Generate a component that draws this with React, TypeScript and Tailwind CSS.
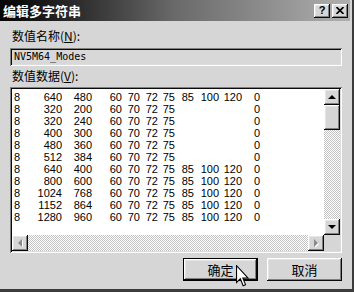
import React from 'react';

// Windows 2000 style "Edit Multi-String" registry dialog

const raised =
  'shadow-[inset_-1px_-1px_#0a0a0a,inset_1px_1px_#ffffff,inset_-2px_-2px_#808080,inset_2px_2px_#e4e4e4]';
const sunken =
  'shadow-[inset_1px_1px_#808080,inset_-1px_-1px_#ffffff,inset_2px_2px_#0a0a0a,inset_-2px_-2px_#dcdcdc]';
const dither =
  'bg-[image:repeating-conic-gradient(#c4c4c4_0%_25%,#ffffff_0%_50%)] bg-[length:2px_2px]';

type Row = { w: string; h: string; rates: string[]; extra: string[] };

const full = ['85', '100', '120'];
const rows: Row[] = [
  { w: '640', h: '480', rates: ['60', '70', '72', '75'], extra: full },
  { w: '320', h: '200', rates: ['60', '70', '72', '75'], extra: [] },
  { w: '320', h: '240', rates: ['60', '70', '72', '75'], extra: [] },
  { w: '400', h: '300', rates: ['60', '70', '72', '75'], extra: [] },
  { w: '480', h: '360', rates: ['60', '70', '72', '75'], extra: [] },
  { w: '512', h: '384', rates: ['60', '70', '72', '75'], extra: [] },
  { w: '640', h: '400', rates: ['60', '70', '72', '75'], extra: full },
  { w: '800', h: '600', rates: ['60', '70', '72', '75'], extra: full },
  { w: '1024', h: '768', rates: ['60', '70', '72', '75'], extra: full },
  { w: '1152', h: '864', rates: ['60', '70', '72', '75'], extra: full },
  { w: '1280', h: '960', rates: ['60', '70', '72', '75'], extra: full },
];

const Arrow = ({ dir, disabled }: { dir: 'up' | 'down' | 'left' | 'right'; disabled?: boolean }) => {
  const pts = {
    up: '4,1 0,5 8,5',
    down: '0,1 8,1 4,5',
    left: '5,0 5,8 1,4',
    right: '1,0 1,8 5,4',
  }[dir];
  const vertical = dir === 'up' || dir === 'down';
  return (
    <svg width={vertical ? 8 : 6} height={vertical ? 6 : 8} viewBox={vertical ? '0 0 8 6' : '0 0 6 8'}>
      {disabled && <polygon points={pts} fill="#ffffff" transform="translate(1,1)" />}
      <polygon points={pts} fill={disabled ? '#8a8a8a' : '#000000'} />
    </svg>
  );
};

const ScrollButton = ({ dir, disabled }: { dir: 'up' | 'down' | 'left' | 'right'; disabled?: boolean }) => (
  <div className={`w-[16px] h-[16px] shrink-0 bg-[#d6d6d6] flex items-center justify-center ${raised}`}>
    <Arrow dir={dir} disabled={disabled} />
  </div>
);

const Cursor = () => (
  <svg className="absolute left-[236px] top-[265px]" width="13" height="22" viewBox="0 0 12 20">
    <path
      d="M0.5 0.5 V16 L4 12.6 L6.6 19 L8.8 18 L6.3 11.8 H11 Z"
      fill="#ffffff"
      stroke="#000000"
      strokeWidth="1"
      strokeLinejoin="miter"
    />
  </svg>
);

const App: React.FC = () => {
  return (
    <div className="relative w-[354px] h-[292px] bg-[#d6d6d6] border-r-2 border-b-[3px] border-r-[#3c3c3c] border-b-[#3c3c3c] overflow-hidden font-['Liberation_Sans','Noto_Sans_CJK_SC',sans-serif]">
      <div className="flex flex-col h-full pr-[2px]">
        {/* title bar */}
        <div className="h-[21px] shrink-0 flex items-center justify-between pl-[3px] pr-[2px] bg-gradient-to-r from-[#050505] via-[#6a6a6a] to-[#b0b0b0]">
          <span className="text-white font-bold text-[13px] leading-none font-['Noto_Sans_CJK_SC',sans-serif]">
            编辑多字符串
          </span>
          <div className="flex gap-[2px]">
            <div className={`w-[16px] h-[14px] bg-[#d6d6d6] flex items-center justify-center ${raised}`}>
              <span className="text-[11px] font-bold leading-none text-black">?</span>
            </div>
            <div className={`w-[16px] h-[14px] bg-[#d6d6d6] flex items-center justify-center ${raised}`}>
              <svg width="8" height="7" viewBox="0 0 8 7">
                <path d="M0.5 0 L7.5 7 M7.5 0 L0.5 7" stroke="#000" strokeWidth="1.6" />
              </svg>
            </div>
          </div>
        </div>

        {/* body */}
        <div className="flex flex-col pl-[10px] pr-[8px]">
          <div className="mt-[8px] h-[14px] pl-[2px] text-[12px] leading-[14px] text-black font-['Noto_Sans_CJK_SC',sans-serif]">
            数值名称(<span className="underline">N</span>):
          </div>

          <div className={`mt-[5px] h-[18px] flex items-center pl-[4px] bg-[#d8d8d8] ${sunken}`}>
            <span className="text-[10px] leading-none text-black font-['DejaVu_Sans_Mono',monospace]">
              NV5M64_Modes
            </span>
          </div>

          <div className="mt-[3px] h-[14px] pl-[2px] text-[12px] leading-[14px] text-black font-['Noto_Sans_CJK_SC',sans-serif]">
            数值数据(<span className="underline">V</span>):
          </div>

          {/* multi-line edit box */}
          <div className={`mt-[4px] h-[166px] p-[2px] bg-white ${sunken}`}>
            <div className="flex flex-col h-full">
              <div className="flex flex-1 min-h-0">
                <div className="flex-1 pt-[2px] pl-[2px] text-[11px] leading-[12px] text-black font-['Liberation_Sans',Arial,sans-serif]">
                  {rows.map((r, i) => (
                    <div
                      key={i}
                      className="grid grid-cols-[20px_28px_30px_30px_18px_18px_17px_19px_25px_23px_18px] h-[12px]"
                    >
                      <span>8</span>
                      <span className="text-right">{r.w}</span>
                      <span className="text-right">{r.h}</span>
                      {r.rates.map((v, j) => (
                        <span key={j} className="text-right">
                          {v}
                        </span>
                      ))}
                      <span className="text-right">{r.extra[0] ?? ''}</span>
                      <span className="text-right">{r.extra[1] ?? ''}</span>
                      <span className="text-right">{r.extra[2] ?? ''}</span>
                      <span className="text-right">0</span>
                    </div>
                  ))}
                </div>
                {/* vertical scrollbar */}
                <div className={`w-[16px] flex flex-col ${dither}`}>
                  <ScrollButton dir="up" />
                  <div className={`h-[25px] bg-[#d6d6d6] ${raised}`} />
                  <div className="flex-1" />
                  <ScrollButton dir="down" />
                </div>
              </div>
              {/* horizontal scrollbar */}
              <div className="flex h-[16px]">
                <div className={`flex flex-1 justify-between ${dither}`}>
                  <ScrollButton dir="left" disabled />
                  <ScrollButton dir="right" disabled />
                </div>
                <div className="w-[16px] bg-[#d6d6d6]" />
              </div>
            </div>
          </div>

          {/* buttons */}
          <div className="mt-[5px] flex justify-end gap-[9px]">
            <div className="w-[75px] h-[23px] border border-black">
              <div className={`w-full h-full bg-[#d6d6d6] flex items-center justify-center ${raised}`}>
                <span className="text-[13px] leading-none text-black font-['Noto_Sans_CJK_SC',sans-serif]">确定</span>
              </div>
            </div>
            <div className={`w-[75px] h-[23px] bg-[#d6d6d6] flex items-center justify-center ${raised}`}>
              <span className="text-[13px] leading-none text-black font-['Noto_Sans_CJK_SC',sans-serif]">取消</span>
            </div>
          </div>
        </div>
      </div>
      <Cursor />
    </div>
  );
};

export default App;
